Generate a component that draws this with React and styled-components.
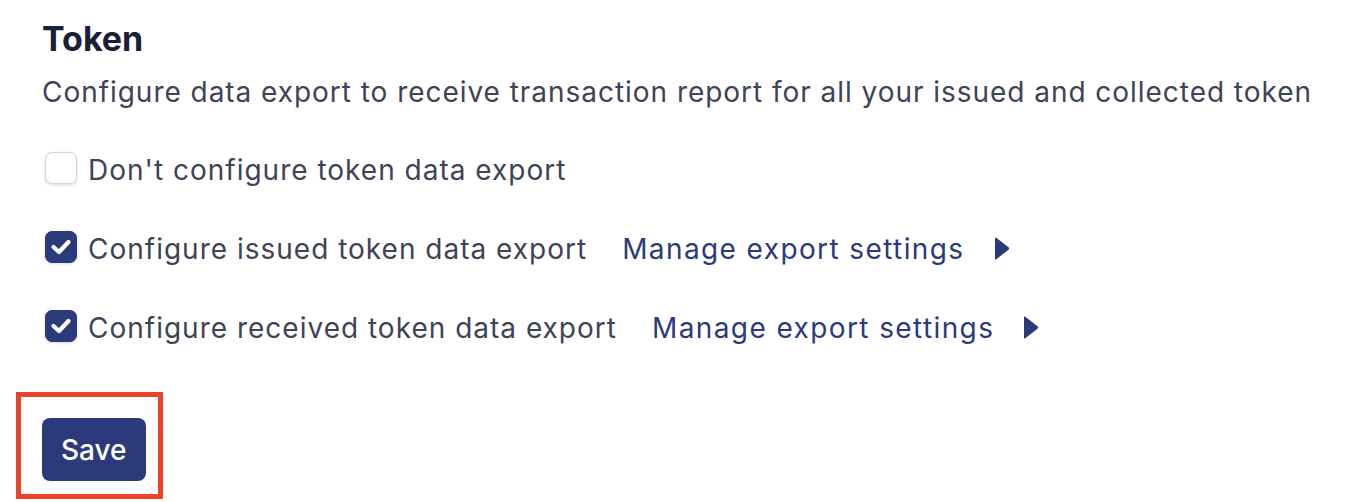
import React, { useState } from 'react';
import styled, { createGlobalStyle } from 'styled-components';

const GlobalStyle = createGlobalStyle`
  body {
    margin: 0;
    background: #ffffff;
    font-family: Inter, "Noto Sans", sans-serif;
  }
`;

const Page = styled.div`
  padding: 19px 42px 0 42px;
  box-sizing: border-box;
`;

const Title = styled.h2`
  margin: 0;
  font-size: 34px;
  line-height: 40px;
  font-weight: 700;
  color: #1b2036;
`;

const Description = styled.p`
  margin: 15px 0 0 0;
  font-size: 28px;
  line-height: 36px;
  letter-spacing: 0.96px;
  white-space: nowrap;
  color: #3e4356;
`;

const OptionList = styled.div`
  display: flex;
  flex-direction: column;
  gap: 39px;
  margin-top: 38px;
`;

const OptionRow = styled.div`
  display: flex;
  align-items: center;
  height: 40px;
`;

const Box = styled.button`
  width: 32px;
  height: 32px;
  margin-left: 3px;
  padding: 0;
  border-radius: 7px;
  border: 1.5px solid ${p => (p.checked ? '#2b3a7b' : '#d3d5db')};
  background: ${p => (p.checked ? '#2b3a7b' : '#ffffff')};
  box-shadow: 0 1px 3px rgba(0, 0, 0, 0.15);
  display: flex;
  align-items: center;
  justify-content: center;
  cursor: pointer;
  box-sizing: border-box;
  flex-shrink: 0;
`;

const Label = styled.span`
  margin-left: 11px;
  font-size: 28px;
  line-height: 36px;
  letter-spacing: 1px;
  white-space: nowrap;
  color: #3e4356;
  padding-top: 3px;
`;

const ManageLink = styled.a`
  display: flex;
  align-items: center;
  gap: 28px;
  margin-left: 35px;
  font-size: 28px;
  line-height: 36px;
  letter-spacing: 1.4px;
  white-space: nowrap;
  color: #2b3a7b;
  text-decoration: none;
  cursor: pointer;
  padding-top: 3px;
`;

const SaveArea = styled.div`
  display: inline-block;
  margin: 46px 0 0 -26px;
  padding: 21px 12px 13px 21px;
  border: 5px solid #e8432b;
`;

const SaveButton = styled.button`
  height: 63px;
  padding: 0 19px;
  border: none;
  border-radius: 8px;
  background: #2b3a7b;
  color: #ffffff;
  font-family: Inter, "Noto Sans", sans-serif;
  font-size: 28px;
  font-weight: 500;
  cursor: pointer;
  display: block;
`;

const CheckIcon = () => (
  <svg width="22" height="18" viewBox="0 0 22 18">
    <path d="M3.5 9 L9 14 L18.5 4" fill="none" stroke="#fff" strokeWidth="4.2" strokeLinecap="round" strokeLinejoin="round" />
  </svg>
);

const Caret = () => (
  <svg width="17" height="25" viewBox="0 0 17 25">
    <path d="M2 2.5 Q2 1 3.3 1.8 L15.5 11.3 Q16.6 12.5 15.5 13.7 L3.3 23.2 Q2 24 2 22.5 Z" fill="#2b3a7b" />
  </svg>
);

const options = [
  { id: 'none', label: "Don't configure token data export", link: false },
  { id: 'issued', label: 'Configure issued token data export', link: true },
  { id: 'received', label: 'Configure received token data export', link: true },
];

const App = () => {
  const [checked, setChecked] = useState({ none: false, issued: true, received: true });

  return (
    <Page>
      <GlobalStyle />
      <Title>Token</Title>
      <Description>
        Configure data export to receive transaction report for all your issued and collected token
      </Description>
      <OptionList>
        {options.map(o => (
          <OptionRow key={o.id}>
            <Box checked={checked[o.id]} onClick={() => setChecked({ ...checked, [o.id]: !checked[o.id] })}>
              {checked[o.id] && <CheckIcon />}
            </Box>
            <Label>{o.label}</Label>
            {o.link && (
              <ManageLink>
                Manage export settings
                <Caret />
              </ManageLink>
            )}
          </OptionRow>
        ))}
      </OptionList>
      <SaveArea>
        <SaveButton>Save</SaveButton>
      </SaveArea>
    </Page>
  );
};

export default App;
